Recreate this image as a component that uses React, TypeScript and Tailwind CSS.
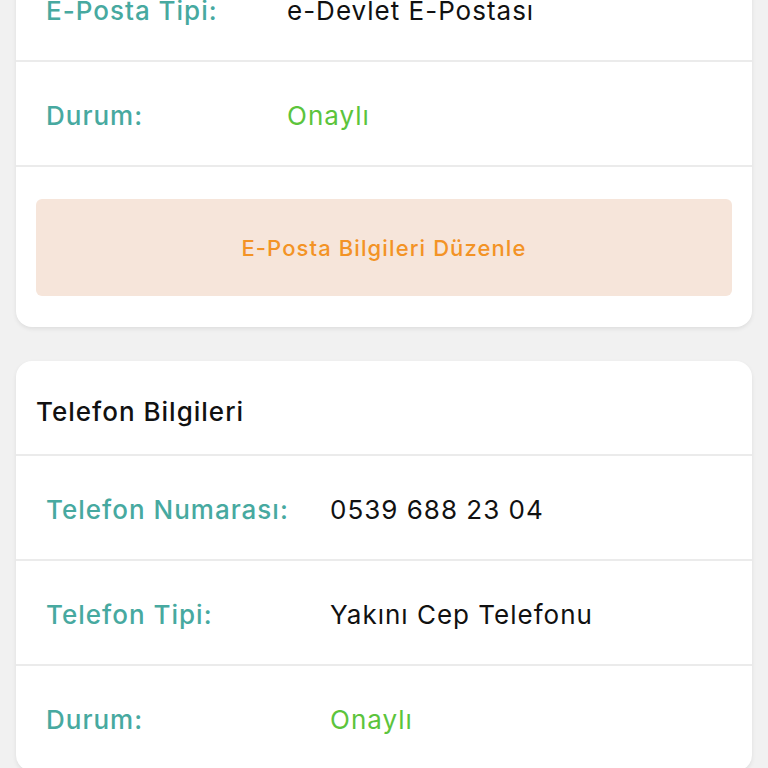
import React from "react";

interface InfoRow {
  label: string;
  value: string;
  status?: boolean;
}

const emailRows: InfoRow[] = [
  { label: "E-Posta Tipi:", value: "e-Devlet E-Postası" },
  { label: "Durum:", value: "Onaylı", status: true },
];

const phoneRows: InfoRow[] = [
  { label: "Telefon Numarası:", value: "0539 688 23 04" },
  { label: "Telefon Tipi:", value: "Yakını Cep Telefonu" },
  { label: "Durum:", value: "Onaylı", status: true },
];

function Row({ row, labelWidth }: { row: InfoRow; labelWidth: string }) {
  return (
    <div className="flex h-[105px] items-center border-b-2 border-[#ebebeb] pl-[30px] pt-1">
      <span className={`${labelWidth} shrink-0 font-medium text-[#47a9a0]`}>
        {row.label}
      </span>
      <span className={row.status ? "text-[#5cc43c]" : "text-[#111111]"}>
        {row.value}
      </span>
    </div>
  );
}

export default function App() {
  return (
    <div
      className="min-h-screen overflow-hidden bg-[#f1f1f1] px-[16px] pb-10 text-[26px] tracking-[1px]"
      style={{ fontFamily: 'Inter, "Open Sans", sans-serif' }}
    >
      {/* E-posta kartı (üst kısmı kaydırılmış) */}
      <div className="mt-[-43px] overflow-hidden rounded-[16px] bg-white shadow-[0_2px_4px_rgba(0,0,0,0.08)]">
        {emailRows.map((row) => (
          <Row key={row.label} row={row} labelWidth="w-[241px]" />
        ))}
        <div className="px-5 pb-[31px] pt-[32px]">
          <button className="flex h-[97px] w-full items-center justify-center rounded-[6px] bg-[#f6e5da] pt-0.5 text-[22px] font-medium tracking-[1.1px] text-[#f39325]">
            E-Posta Bilgileri Düzenle
          </button>
        </div>
      </div>

      {/* Telefon kartı */}
      <div className="mt-[34px] overflow-hidden rounded-[16px] bg-white shadow-[0_2px_4px_rgba(0,0,0,0.08)]">
        <div className="flex h-[95px] items-center border-b-2 border-[#ebebeb] pl-5 pt-2 font-medium text-[#111111]">
          Telefon Bilgileri
        </div>
        {phoneRows.map((row) => (
          <Row key={row.label} row={row} labelWidth="w-[284px]" />
        ))}
      </div>
    </div>
  );
}
